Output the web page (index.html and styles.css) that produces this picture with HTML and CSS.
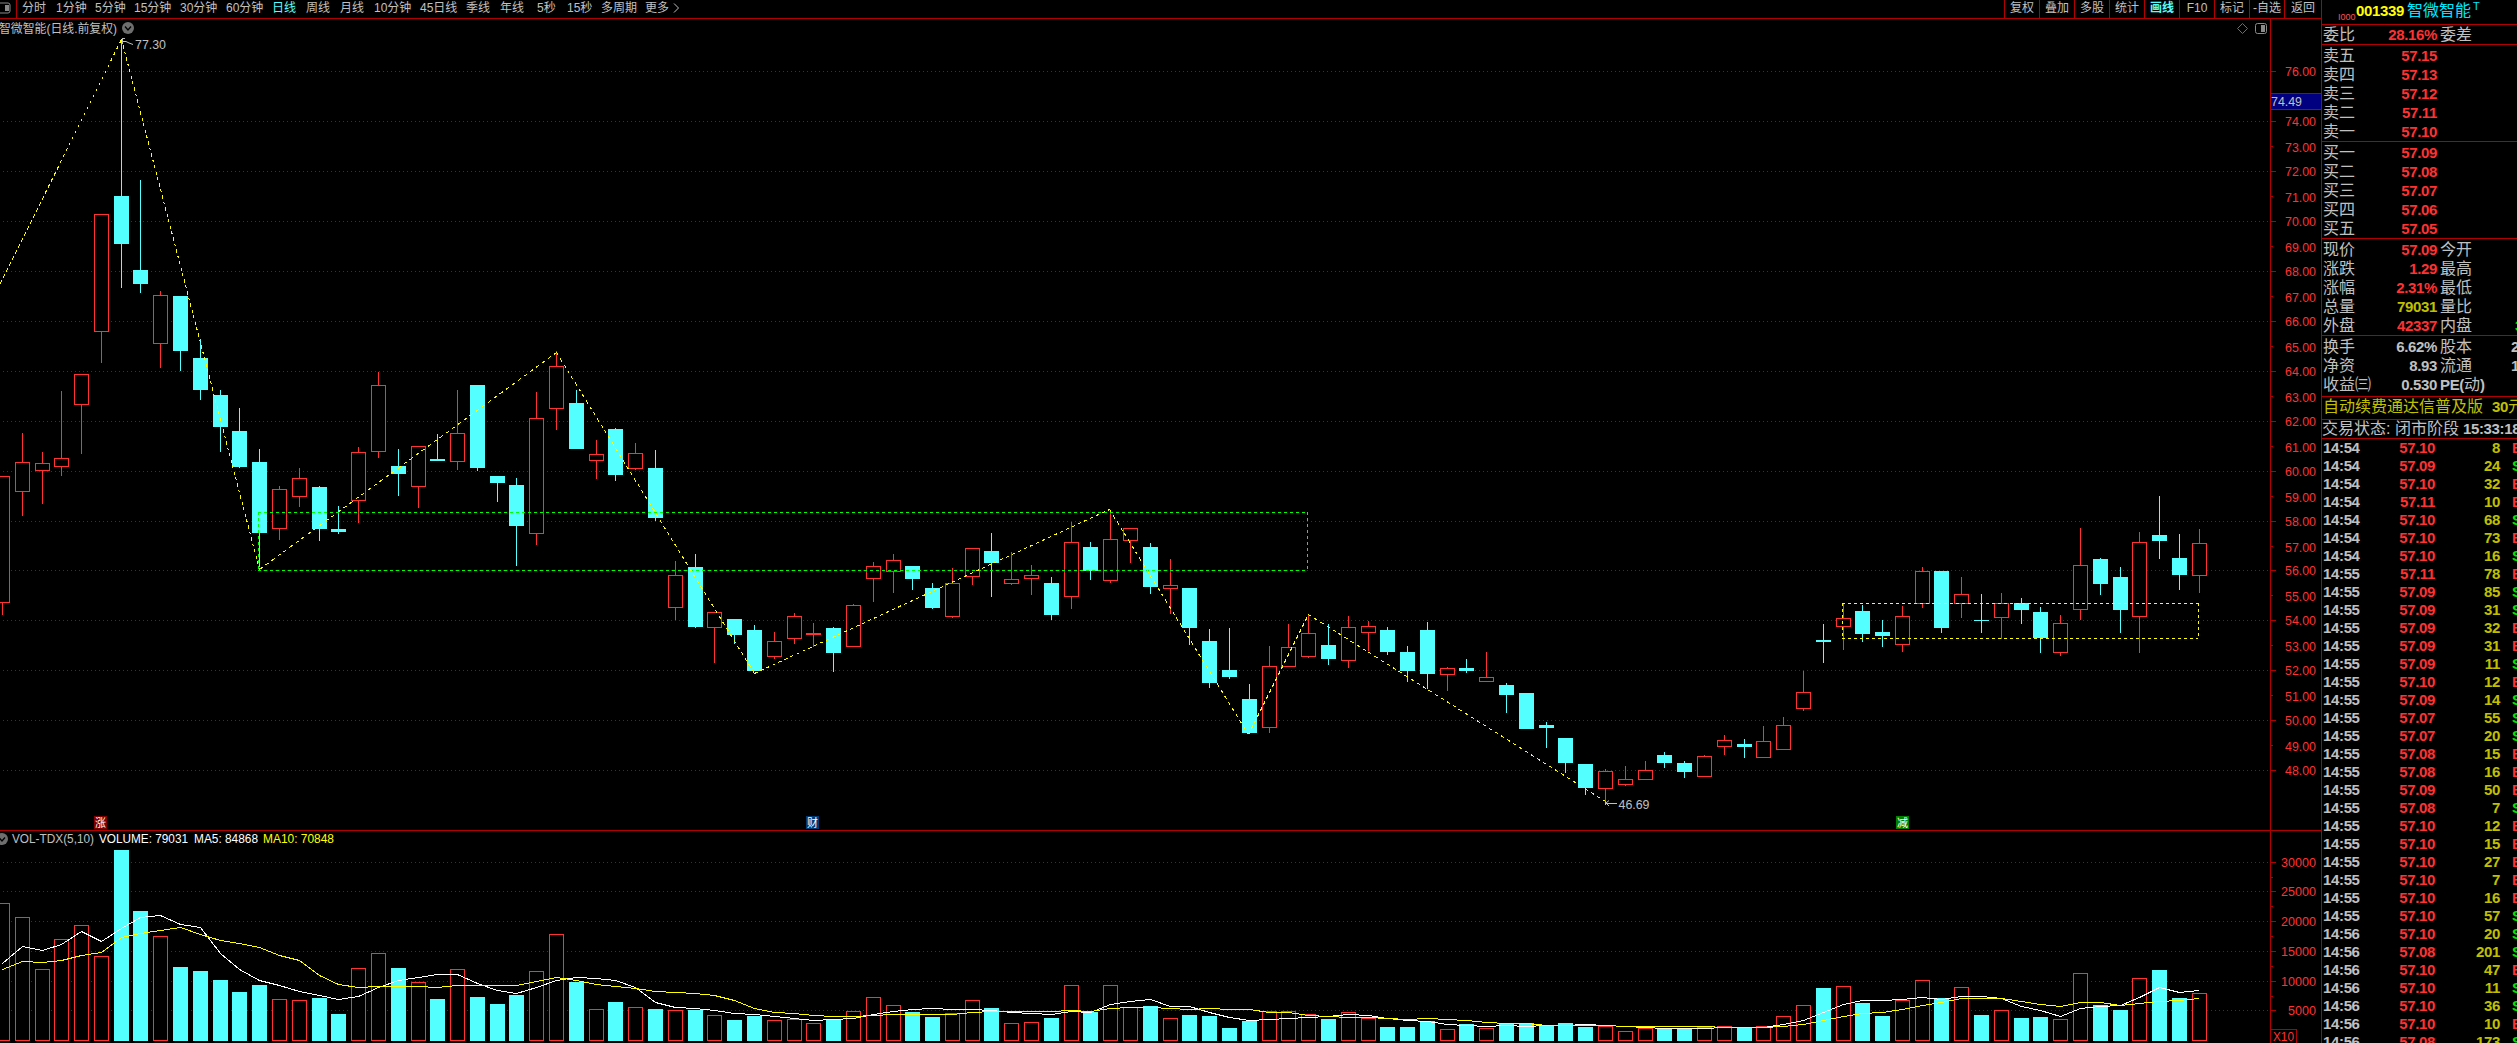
FILE: index.html
```html
<!DOCTYPE html>
<html lang="zh-CN">
<head>
    <meta charset="UTF-8">
    <title>智微智能 001339</title>
    <link rel="stylesheet" href="styles.css">
</head>
<body>
<div class="app">
    <div class="main">
        <div class="topbar">
            <div class="toggle">
                <svg width="12" height="12" viewBox="0 0 12 12"><rect x="-3" y="1" width="13" height="10" rx="2" fill="none" stroke="#8a8a8a"/><rect x="5" y="3" width="4" height="6" fill="#8a8a8a"/></svg>
            </div>
            <div class="periods">
                <span class="c2">分时</span>
                <span class="c3">1分钟</span>
                <span class="c3">5分钟</span>
                <span class="c4">15分钟</span>
                <span class="c4">30分钟</span>
                <span class="c4">60分钟</span>
                <span class="c2 active">日线</span>
                <span class="c2">周线</span>
                <span class="c2">月线</span>
                <span class="c4">10分钟</span>
                <span class="c4">45日线</span>
                <span class="c2">季线</span>
                <span class="year">年线</span>
                <span class="sec">5秒</span>
                <span class="c2">15秒</span>
                <span class="multi">多周期</span>
                <span class="more">更多</span>
                <svg width="7" height="12" viewBox="0 0 7 12"><path d="M1 1.5L5.5 6L1 10.5" fill="none" stroke="#c0c0c0"/></svg>
            </div>
            <div class="tools">
                <span>复权</span>
                <span>叠加</span>
                <span>多股</span>
                <span>统计</span>
                <span class="active bold">画线</span>
                <span>F10</span>
                <span>标记</span>
                <span>-自选</span>
                <span class="last">返回</span>
            </div>
        </div>
        <svg id="priceChart" class="chart" width="2321" height="812" viewBox="0 19 2321 812"></svg>
        <svg id="volChart" class="chart" width="2321" height="212" viewBox="0 831 2321 212"></svg>
    </div>

    <div class="quote">
        <div class="title">
            <span class="flag">I000</span><span class="code">001339</span><span class="name">智微智能</span><span class="sup">T</span>
        </div>
        <div class="box ratio">
            <div class="row"><span class="label">委比</span><b class="red">28.16%</b><span class="label2">委差</span></div>
        </div>
        <div class="box asks">
            <div class="row"><span class="label">卖五</span><b class="red">57.15</b></div>
            <div class="row"><span class="label">卖四</span><b class="red">57.13</b></div>
            <div class="row"><span class="label">卖三</span><b class="red">57.12</b></div>
            <div class="row"><span class="label">卖二</span><b class="red">57.11</b></div>
            <div class="row"><span class="label">卖一</span><b class="red">57.10</b></div>
        </div>
        <div class="box bids">
            <div class="row"><span class="label">买一</span><b class="red">57.09</b></div>
            <div class="row"><span class="label">买二</span><b class="red">57.08</b></div>
            <div class="row"><span class="label">买三</span><b class="red">57.07</b></div>
            <div class="row"><span class="label">买四</span><b class="red">57.06</b></div>
            <div class="row"><span class="label">买五</span><b class="red">57.05</b></div>
        </div>
        <div class="box now">
            <div class="row"><span class="label">现价</span><b class="red">57.09</b><span class="label2">今开</span></div>
            <div class="row"><span class="label">涨跌</span><b class="red">1.29</b><span class="label2">最高</span></div>
            <div class="row"><span class="label">涨幅</span><b class="red">2.31%</b><span class="label2">最低</span></div>
            <div class="row"><span class="label">总量</span><b class="yellow">79031</b><span class="label2">量比</span></div>
            <div class="row"><span class="label">外盘</span><b class="red">42337</b><span class="label2">内盘</span><b class="cut green in">3</b></div>
        </div>
        <div class="box base">
            <div class="row"><span class="label">换手</span><b>6.62%</b><span class="label2">股本</span><b class="cut">2</b></div>
            <div class="row"><span class="label">净资</span><b>8.93</b><span class="label2">流通</span><b class="cut">1</b></div>
            <div class="row"><span class="label">收益㈢</span><b>0.530</b><span class="label2"><b>PE(</b>动<b>)</b></span></div>
        </div>
        <div class="box notice">自动续费通达信普及版<b>30</b>元</div>
        <div class="box state">交易状态: 闭市阶段<b>15:33:18</b></div>
        <div class="ticks" id="ticks"></div>
    </div>
</div>
<script src="chart.js"></script>
</body>
</html>
```

FILE: styles.css
```css
body {
    margin: 0;
    background: #000;
    color: #c0c0c0;
    font-family: "Liberation Sans", "Noto Sans CJK SC", sans-serif;
    overflow: hidden;
}
.app {
    display: flex;
    width: 2517px;
    height: 1043px;
    overflow: hidden;
}
.main {
    width: 2321px;
    flex: none;
    border-right: 1px solid #b00000;
}
.topbar {
    display: flex;
    height: 18px;
    border-bottom: 1px solid #b00000;
    font-size: 12px;
    line-height: 17px;
    white-space: nowrap;
}
.toggle {
    width: 17px;
    border-right: 1px solid #b00000;
    box-sizing: border-box;
    height: 18px;
}
.toggle svg {
    display: block;
    margin-top: 2px;
}
.periods {
    display: flex;
    padding-left: 5px;
    flex: 1;
}
.periods span {
    flex: none;
}
.periods svg {
    margin-top: 2px;
}
.c2 { width: 34px; }
.c3 { width: 39px; }
.c4 { width: 46px; }
.year { width: 37px; }
.sec { width: 30px; }
.multi { width: 44px; }
.more { width: 28px; }
.active { color: #54ffff; }
.bold { font-weight: bold; }
.tools {
    display: flex;
}
.tools span {
    width: 34px;
    height: 18px;
    text-align: center;
    border-left: 1px solid #b00000;
}
.tools .last {
    width: 36px;
}
.chart {
    display: block;
}
.chart text {
    font-size: 12px;
    fill: #c0c0c0;
}
.chart .axis {
    font-size: 13px;
    fill: #ff3232;
}
.chart .num {
    font-size: 13px;
}
.chart .white { fill: #fff; }
.chart .ma10 { fill: #ffff00; }
.chart .badge {
    font-size: 11px;
    fill: #fff;
}

/* quote panel */
.quote {
    width: 195px;
    overflow: hidden;
    font-size: 16px;
    white-space: nowrap;
}
.quote b {
    font-size: 15px;
    letter-spacing: -0.35px;
}
.title {
    display: flex;
    height: 24px;
    line-height: 22px;
    padding-left: 16px;
}
.flag {
    width: 18px;
    font-size: 9px;
    line-height: 34px;
    color: #ff5050;
}
.code {
    width: 51px;
    font-size: 15px;
    font-weight: bold;
    letter-spacing: -0.35px;
    color: #ffff00;
}
.name {
    color: #00e6ff;
    width: 66px;
}
.sup {
    font-size: 11px;
    line-height: 13px;
    color: #00e6ff;
}
.box {
    border-top: 1px solid #b00000;
}
.row {
    display: flex;
    height: 19px;
    line-height: 19px;
}
.label {
    width: 51px;
    padding-left: 1px;
    flex: none;
}
.row > b {
    width: 63px;
    flex: none;
    text-align: right;
}
.label2 {
    padding-left: 3px;
    width: 74px;
    flex: none;
    box-sizing: border-box;
}
.row > .cut {
    text-align: left;
    width: 10px;
}
.row > .in { padding-left: 4px; }
.ratio { height: 19px; }
.asks { height: 95px; padding-top: 1px; }
.bids { height: 95px; padding-top: 1px; }
.now { height: 95px; padding-top: 1px; }
.base { height: 59px; padding-top: 1px; }
.notice {
    height: 22px;
    line-height: 19px;
    padding-left: 1px;
    color: #c0c000;
}
.notice b { margin-left: 9px; }
.state {
    height: 18px;
    line-height: 18px;
    border-bottom: 1px solid #b00000;
}
.state b { margin-left: 4px; }
.red { color: #ff3232; }
.green { color: #00e600; }
.yellow { color: #c0c000; }
.ticks div {
    display: flex;
    height: 18px;
    line-height: 18px;
}
.ticks b {
    flex: none;
}
.ticks .time { width: 60px; padding-left: 1px; }
.ticks .price { width: 52px; text-align: right; }
.ticks .vol { width: 65px; text-align: right; }
.ticks .side { padding-left: 12px; }
```

FILE: chart.js
```js
const RED = '#ff3232', CYAN = '#54ffff', LINE = '#b00000', YELLOW = '#ffff00';

// kind, high, open/close top, open/close bottom, low, volume top
const bars = [
    ['r',476,476,603,615,903],['r',433,462,492,516,917],['r',452,463,471,504,969],['r',391,458,467,476,939],
    ['r',374,374,405,454,925],['r',214,214,332,363,956],['d',40,196,244,288,850],['d',180,270,284,293,911],
    ['r',291,295,344,368,936],['d',296,296,351,371,967],['d',339,358,390,400,971],['d',390,395,427,452,980],
    ['d',408,431,467,468,992],['d',449,462,533,567,985],['r',486,489,529,540,999],['r',468,478,497,507,1000],
    ['d',486,487,529,541,998],['d',506,529,532,534,1014],['r',447,452,501,523,968],['r',372,385,452,458,953],
    ['d',449,466,474,496,968],['r',446,446,487,508,982],['d',434,459,461,461,999],['r',390,433,462,470,969],
    ['d',385,385,468,471,997],['d',476,476,483,502,1004],['d',478,485,526,566,995],['r',392,418,534,545,971],
    ['r',351,366,409,430,934],['d',390,403,449,449,982],['r',440,454,461,479,1009],['d',428,429,475,481,1002],
    ['r',443,453,469,470,1007],['d',450,468,518,521,1009],['r',561,575,608,620,1010],['d',554,567,627,628,1010],
    ['r',612,612,628,663,1015],['d',619,619,635,644,1020],['d',625,630,671,671,1016],['r',632,641,657,659,1020],
    ['r',613,616,639,644,1019],['r',623,633,635,647,1023],['d',627,628,653,672,1019],['r',604,605,647,647,1011],
    ['r',562,566,579,602,997],['r',554,560,572,593,1005],['d',566,566,579,590,1012],['d',583,588,608,609,1017],
    ['r',568,583,617,618,1013],['r',548,548,577,585,1000],['d',533,551,563,597,1008],['r',552,579,584,585,1023],
    ['r',565,575,579,595,1022],['d',577,583,615,620,1018],['r',522,542,597,609,985],['d',542,547,571,580,1012],
    ['r',510,539,581,583,985],['r',528,528,541,563,1007],['d',543,547,587,594,1006],['r',559,585,589,614,1018],
    ['d',588,588,628,645,1015],['d',629,641,683,688,1016],['d',628,670,677,679,1028],['d',684,699,733,733,1021],
    ['r',646,666,728,733,1011],['r',624,647,667,667,1011],['r',615,633,657,658,1014],['d',624,645,659,665,1019],
    ['r',616,627,661,668,1012],['r',621,626,633,651,1018],['d',627,630,652,655,1027],['d',646,652,671,682,1027],
    ['d',622,630,674,689,1021],['r',667,668,675,691,1029],['d',659,668,671,673,1024],['r',652,677,682,682,1028],
    ['d',683,685,695,713,1023],['d',693,693,729,729,1023],['d',722,725,728,748,1025],['d',738,738,763,773,1023],
    ['d',764,764,788,795,1027],['r',769,771,789,802,1026],['r',766,779,785,786,1031],['r',761,770,780,780,1028],
    ['d',752,755,763,768,1028],['d',761,763,772,778,1028],['r',755,756,777,777,1027],['r',735,740,747,755,1026],
    ['d',739,744,747,758,1027],['r',726,741,758,758,1026],['r',717,725,750,750,1016],['r',671,692,709,711,1005],
    ['d',624,640,642,663,988],['r',603,618,627,650,986],['d',605,611,634,642,1003],['d',620,632,636,647,1016],
    ['r',606,616,645,652,1000],['r',567,571,604,608,980],['d',571,571,628,633,998],['r',577,594,604,618,987],
    ['d',594,620,621,633,1015],['r',593,603,618,639,1010],['d',598,603,610,624,1018],['d',607,612,638,653,1017],
    ['r',615,623,653,656,1019],['r',528,565,610,620,973],['d',558,559,584,595,1005],['d',567,577,610,633,1010],
    ['r',532,542,617,653,978],['d',496,535,541,559,970],['d',534,558,575,590,998],['r',529,543,576,593,993]
];

const ma5 = [963,946,950,944,931,941,928,917,915,924,927,953,969,980,985,991,995,999,996,987,980,977,974,974,983,990,
    993,987,980,977,978,980,987,1002,1007,1008,1010,1013,1014,1016,1018,1020,1019,1018,1014,1011,1009,1008,1009,1009,
    1010,1012,1013,1014,1011,1012,1004,1001,999,1006,1006,1012,1017,1020,1019,1018,1017,1016,1014,1015,1018,1020,1021,
    1024,1025,1026,1025,1026,1025,1025,1024,1025,1026,1027,1028,1028,1028,1027,1027,1027,1024,1020,1012,1004,1000,1000,
    999,997,999,996,996,998,1006,1010,1016,1008,1006,1005,997,987,992,990];

const ma10 = [969,961,962,960,955,952,937,933,930,927,934,940,943,947,955,960,975,984,987,986,986,986,987,985,985,985,
    985,981,977,980,984,986,988,991,992,993,995,1000,1008,1012,1013,1015,1016,1016,1015,1014,1014,1014,1014,1012,1011,
    1011,1011,1011,1010,1011,1008,1007,1007,1008,1009,1008,1009,1009,1012,1012,1015,1016,1017,1017,1018,1019,1018,1019,
    1020,1022,1023,1023,1025,1025,1025,1025,1026,1026,1026,1026,1026,1027,1027,1027,1026,1024,1020,1016,1013,1012,1009,
    1005,1002,998,998,998,1001,1004,1006,1002,1002,1005,1003,1001,1000,998];

function cx(i) {
    return Math.floor(2.4175 + 19.7915 * i);
}
function rect(x, y, w, h, fill) {
    return `<rect x="${x}" y="${y}" width="${w}" height="${h}" fill="${fill}"/>`;
}
function frame(x, y, w, h, color) {
    return `<rect x="${x + 0.5}" y="${y + 0.5}" width="${w - 1}" height="${h - 1}" fill="#000" stroke="${color}"/>`;
}
function line(x1, y1, x2, y2, color, dash) {
    return `<line x1="${x1}" y1="${y1}" x2="${x2}" y2="${y2}" stroke="${color}"` +
        (dash ? ` stroke-dasharray="${dash}"` : '') + ' shape-rendering="crispEdges"/>';
}
function text(x, y, str, cls, len) {
    return `<text x="${x}" y="${y}" class="${cls || ''}"` +
        (len ? ` textLength="${len}" lengthAdjust="spacingAndGlyphs"` : '') + `>${str}</text>`;
}
function grid(y) {
    return line(3, y + 0.5, 2270, y + 0.5, LINE, '1 3');
}
function dashBox(x1, y1, x2, y2, color) {
    return line(x1, y1 + 0.5, x2, y1 + 0.5, color, '3 3') + line(x1, y2 + 0.5, x2, y2 + 0.5, color, '3 3') +
        line(x1 + 0.5, y1, x1 + 0.5, y2, color, '3 3') + line(x2 + 0.5, y1, x2 + 0.5, y2, color, '3 3');
}
function dropIcon(x, y) {
    return `<circle cx="${x}" cy="${y}" r="6" fill="#6e6e6e"/>` +
        `<path d="M${x - 3} ${y - 1.5}l3 3.5l3 -3.5" fill="none" stroke="#000" stroke-width="1.3"/>`;
}

function drawPrice() {
    let s = '';
    const evenY = [71,121,171,221,271,321,371,421,471,521,570,620,670,720,770];
    const oddY = [146,196,246,296,346,396,446,496,546,595,645,695,745];
    evenY.forEach((y, i) => {
        s += grid(y) + rect(2271, y, 5, 1, LINE) + text(2285, y + 5, (76 - i * 2) + '.00', 'axis', 31);
    });
    oddY.forEach((y, i) => {
        s += rect(2271, y, 2, 1, LINE) + text(2285, y + 6, (73 - i * 2) + '.00', 'axis', 31);
    });

    bars.forEach((b, i) => {
        const x = cx(i), color = b[0] === 'r' ? RED : CYAN;
        s += rect(x, b[1], 1, b[4] - b[1], color);
        s += b[0] === 'r' ? frame(x - 7, b[2], 15, b[3] - b[2], RED) : rect(x - 7, b[2], 15, b[3] - b[2], CYAN);
    });

    s += dashBox(258, 512, 1307, 570, '#00ff00');
    s += dashBox(1842, 603, 2198, 638, YELLOW);

    const zig = [[-15,313],[121,39],[259,569],[556,352],[754,673],[1109,509],[1248,734],[1308,614],[1605,801]];
    for (let i = 1; i < zig.length; i++) {
        const [x1, y1] = zig[i - 1], [x2, y2] = zig[i];
        const dx = Math.abs(x2 - x1), dy = Math.abs(y2 - y1);
        const k = (3 * Math.hypot(dx, dy) / Math.max(dx, dy)).toFixed(2);
        s += line(x1 + 0.5, y1 + 0.5, x2 + 0.5, y2 + 0.5, YELLOW, k + ' ' + k);
    }

    // highest and lowest price marks
    s += '<path d="M122 41.5h4l3 1.5l4 1.5M122 38.5h3M122.5 39v5" fill="none" stroke="#c0c0c0"/>';
    s += text(135, 49, '77.30', 'num', 31);
    s += '<path d="M1606 803.5h11M1605.5 801v4M1606 803l3 -2.5M1606 803l3 3" fill="none" stroke="#c0c0c0"/>';
    s += text(1618.5, 809, '46.69', 'num', 31);

    s += rect(94, 816, 13, 13, '#800000') + text(95, 826.5, '涨', 'badge');
    s += rect(806, 816, 13, 13, '#003a75') + text(807, 826.5, '财', 'badge');
    s += rect(1896, 816, 13, 13, '#008000') + text(1897, 826.5, '减', 'badge');

    s += text(-1, 32.5, '智微智能(日线.前复权)', '', 118) + dropIcon(128, 28);
    s += '<path d="M2242.5 23.5l5 5l-5 5l-5 -5z" fill="none" stroke="#6e6e6e"/>';
    s += '<rect x="2255.5" y="23.5" width="11" height="10" rx="2" fill="none" stroke="#8a8a8a"/>' + rect(2261, 25, 4, 7, '#8a8a8a');

    s += rect(2270, 19, 1, 811, LINE) + rect(0, 830, 2321, 1, LINE);
    s += rect(2270, 93, 51, 17, LINE) + rect(2271, 94, 50, 15, '#000080') + text(2271, 105.5, '74.49', 'num', 31);
    document.getElementById('priceChart').innerHTML = s;
}

function drawVolume() {
    let s = '';
    [862,891,921,951,981,1010].forEach((y, i) => {
        const v = String(30000 - i * 5000);
        s += grid(y) + rect(2271, y, 5, 1, LINE);
        s += v.length === 5 ? text(2281, y + 5, v, 'axis', 35) : text(2288, y + 5, v, 'axis', 28);
    });
    [877,906,936,966,996].forEach(y => {
        s += rect(2271, y, 2, 1, LINE);
    });
    bars.forEach((b, i) => {
        const x = cx(i) - 7;
        s += b[0] === 'r' ? frame(x, b[5], 15, 1041 - b[5], RED) : rect(x, b[5], 15, 1041 - b[5], CYAN);
    });
    [[ma5, '#fff'], [ma10, YELLOW]].forEach(([ma, color]) => {
        const pts = ma.map((y, i) => (cx(i) + 0.5) + ',' + (y + 0.5)).join(' ');
        s += `<polyline points="${pts}" fill="none" stroke="${color}" shape-rendering="crispEdges"/>`;
    });
    s += dropIcon(2, 839);
    s += text(12, 843, 'VOL-TDX(5,10)', '', 82);
    s += text(99, 843, 'VOLUME: 79031', 'white', 89);
    s += text(194, 843, 'MA5: 84868', 'white', 64);
    s += text(263, 843, 'MA10: 70848', 'ma10', 71);
    s += rect(2270, 831, 1, 212, LINE);
    s += '<rect x="2270.5" y="1029.5" width="26" height="16" fill="none" stroke="#b00000"/>';
    s += text(2273, 1041, 'X10', 'axis', 21);
    document.getElementById('volChart').innerHTML = s;
}

function drawTicks() {
    const rows = [
        ['54','10',8,'B'],['54','09',24,'S'],['54','10',32,'B'],['54','11',10,'B'],['54','10',68,'S'],
        ['54','10',73,'B'],['54','10',16,'S'],['55','11',78,'B'],['55','09',85,'S'],['55','09',31,'S'],
        ['55','09',32,'B'],['55','09',31,'B'],['55','09',11,'S'],['55','10',12,'B'],['55','09',14,'S'],
        ['55','07',55,'S'],['55','07',20,'S'],['55','08',15,'B'],['55','08',16,'B'],['55','09',50,'B'],
        ['55','08',7,'S'],['55','10',12,'B'],['55','10',15,'B'],['55','10',27,'B'],['55','10',7,'B'],
        ['55','10',16,'B'],['55','10',57,'S'],['56','10',20,'S'],['56','08',201,'S'],['56','10',47,'B'],
        ['56','10',11,'S'],['56','10',36,'S'],['56','10',10,'B'],['56','08',173,'S']
    ];
    document.getElementById('ticks').innerHTML = rows.map(r => `
        <div>
            <b class="time">14:${r[0]}</b>
            <b class="price red">57.${r[1]}</b>
            <b class="vol yellow">${r[2]}</b>
            <b class="side ${r[3] === 'B' ? 'red' : 'green'}">${r[3]}</b>
        </div>`).join('');
}

drawPrice();
drawVolume();
drawTicks();
```
